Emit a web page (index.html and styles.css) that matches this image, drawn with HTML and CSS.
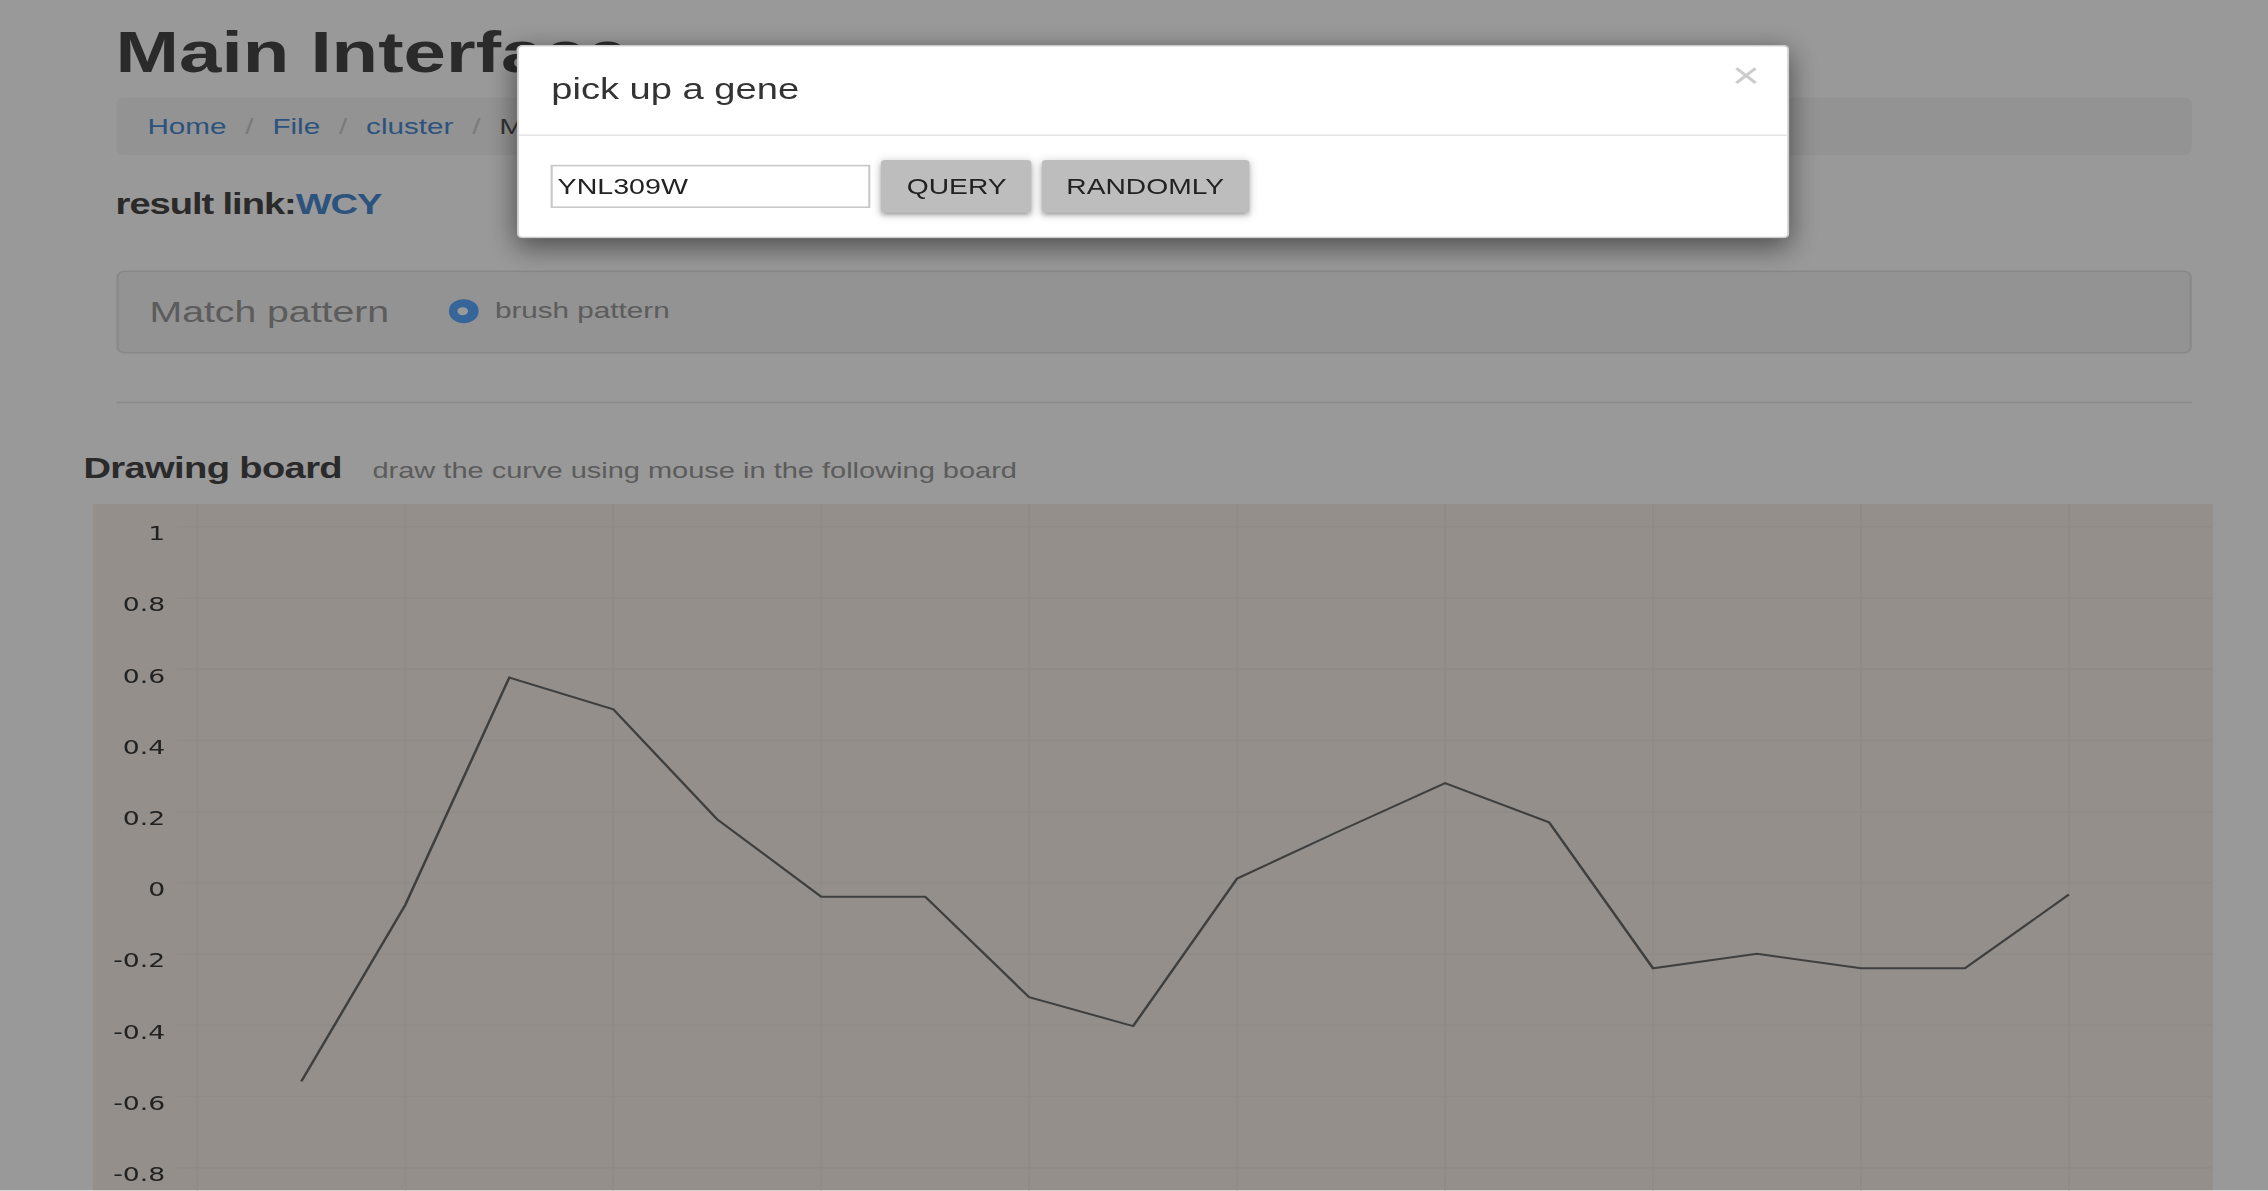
FILE: index.html
```html
<!DOCTYPE html>
<html lang="en">
<head>
<meta charset="utf-8">
<title>Main Interface</title>
<link rel="stylesheet" href="styles.css">
</head>
<body>
<div class="stage">
  <div class="container">
    <h1 class="page-title">Main Interface</h1>
    <ol class="breadcrumb">
      <li><a href="#">Home</a></li>
      <li><a href="#">File</a></li>
      <li><a href="#">cluster</a></li>
      <li class="active">Main Interface</li>
    </ol>
    <h4 class="result">result link:<a href="#">WCY</a></h4>
    <div class="well">
      <span class="well-title">Match pattern</span>
      <label class="radio"><span class="radio-dot"></span>brush pattern</label>
    </div>
    <hr class="rule">
  </div>
  <div class="board">
    <h4 class="board-title">Drawing board <small>draw the curve using mouse in the following board</small></h4>
    <div class="chart">
      <svg class="chart-svg" viewBox="0 0 1000.7 440" xmlns="http://www.w3.org/2000/svg">
        <g class="grid">
          <line x1="49.2" y1="0" x2="49.2" y2="440"/>
          <line x1="147.4" y1="0" x2="147.4" y2="440"/>
          <line x1="245.6" y1="0" x2="245.6" y2="440"/>
          <line x1="343.8" y1="0" x2="343.8" y2="440"/>
          <line x1="442" y1="0" x2="442" y2="440"/>
          <line x1="540.2" y1="0" x2="540.2" y2="440"/>
          <line x1="638.4" y1="0" x2="638.4" y2="440"/>
          <line x1="736.6" y1="0" x2="736.6" y2="440"/>
          <line x1="834.8" y1="0" x2="834.8" y2="440"/>
          <line x1="933" y1="0" x2="933" y2="440"/>
          <line x1="39.6" y1="14.3" x2="1000.7" y2="14.3"/>
          <line x1="39.6" y1="58.8" x2="1000.7" y2="58.8"/>
          <line x1="39.6" y1="103.3" x2="1000.7" y2="103.3"/>
          <line x1="39.6" y1="147.8" x2="1000.7" y2="147.8"/>
          <line x1="39.6" y1="192.3" x2="1000.7" y2="192.3"/>
          <line x1="39.6" y1="236.8" x2="1000.7" y2="236.8"/>
          <line x1="39.6" y1="281.3" x2="1000.7" y2="281.3"/>
          <line x1="39.6" y1="325.8" x2="1000.7" y2="325.8"/>
          <line x1="39.6" y1="370.3" x2="1000.7" y2="370.3"/>
          <line x1="39.6" y1="414.8" x2="1000.7" y2="414.8"/>
        </g>
        <g class="axis">
          <text x="34" y="22.6">1</text>
          <text x="34" y="67.1">0.8</text>
          <text x="34" y="111.6">0.6</text>
          <text x="34" y="156.1">0.4</text>
          <text x="34" y="200.6">0.2</text>
          <text x="34" y="245.1">0</text>
          <text x="34" y="289.6">-0.2</text>
          <text x="34" y="334.1">-0.4</text>
          <text x="34" y="378.6">-0.6</text>
          <text x="34" y="423.1">-0.8</text>
        </g>
        <polyline class="curve" points="98.3,360.9 147.4,250.5 196.5,108.5 245.6,128.3 294.7,197.1 343.8,245.4 392.9,245.4 442,308.3 491.1,326.3 540.2,234.1 589.3,203.9 638.4,174.5 687.5,198.9 736.6,290.2 785.7,281.1 834.8,290.2 883.9,290.2 933,244.1"/>
      </svg>
    </div>
  </div>

  <div class="backdrop"></div>

  <div class="modal">
    <div class="modal-header">
      <h4 class="modal-title">pick up a gene</h4>
      <button class="close" type="button">&times;</button>
    </div>
    <div class="modal-body">
      <input class="gene-input" type="text" value="YNL309W">
      <button class="btn" type="button">Query</button>
      <button class="btn" type="button">Randomly</button>
    </div>
  </div>
</div>
</body>
</html>
```

FILE: styles.css
```css
html, body {
  margin: 0;
  padding: 0;
  width: 2268px;
  height: 1191px;
  overflow: hidden;
  background: #fff;
}

.stage {
  position: relative;
  width: 1071px;
  height: 744.4px;
  overflow: hidden;
  transform: scale(2.11765, 1.6);
  transform-origin: 0 0;
  background: #fff;
  font-family: "Liberation Sans", Arial, sans-serif;
  font-size: 14px;
  line-height: 1.42857;
  color: #333;
}

.container {
  margin-left: 54.6px;
  width: 980.3px;
}

.page-title {
  margin: 12.7px 0 0;
  font-size: 36px;
  line-height: 39.6px;
  font-weight: 700;
  color: #474747;
}

.breadcrumb {
  list-style: none;
  margin: 8.7px 0 0;
  padding: 8px 15px;
  background: #f5f5f5;
  border-radius: 4px;
  line-height: 20px;
}

.breadcrumb li {
  display: inline-block;
}

.breadcrumb li + li::before {
  content: "/\00a0";
  padding: 0 5px;
  color: #ccc;
}

.breadcrumb a {
  color: #4a8bd0;
  text-decoration: none;
}

.breadcrumb .active {
  color: #555;
}

.result {
  margin: 21.9px 0 0;
  font-size: 18px;
  line-height: 19.8px;
  font-weight: 700;
  letter-spacing: -0.5px;
  color: #474747;
}

.result a {
  color: #4a8bd0;
  text-decoration: none;
}

.well {
  margin-top: 30.3px;
  height: 52px;
  box-sizing: border-box;
  border: 1px solid #e3e3e3;
  border-radius: 4px;
  background: #f5f5f5;
  display: flex;
  align-items: center;
  padding: 0 15px;
}

.well-title {
  font-size: 18.5px;
  color: #999;
}

.radio {
  display: flex;
  align-items: center;
  margin-left: 28px;
  font-size: 14px;
  color: #999;
}

.radio-dot {
  width: 14.5px;
  height: 15px;
  border-radius: 50%;
  background: #5aaaff;
  margin-right: 7.5px;
  display: flex;
  align-items: center;
  justify-content: center;
}

.radio-dot::after {
  content: "";
  width: 5px;
  height: 5px;
  border-radius: 50%;
  background: #fff;
}

.rule {
  margin: 30.3px 0 0;
  border: 0;
  border-top: 1px solid #e6e6e6;
  height: 0;
}

.board {
  margin-left: 44.4px;
  width: 1000.7px;
}

.board-title {
  margin: 31.6px 0 0 -5px;
  font-size: 18px;
  line-height: 19.8px;
  font-weight: 700;
  letter-spacing: -0.3px;
  color: #474747;
}

.board-title small {
  font-size: 13.7px;
  font-weight: 400;
  letter-spacing: 0;
  color: #999;
  margin-left: 9.7px;
}

.chart {
  margin-top: 10px;
  height: 440px;
  background: #f7efe8;
}

.chart-svg {
  display: block;
  width: 1000.7px;
  height: 440px;
}

.grid line {
  stroke: #efe8e1;
  stroke-width: 1;
}

.axis text {
  font-family: "DejaVu Sans", Verdana, sans-serif;
  font-size: 12.6px;
  fill: #383838;
  text-anchor: end;
}

.curve {
  fill: none;
  stroke: #6a6a6a;
  stroke-width: 1.25;
  stroke-linejoin: miter;
}

.backdrop {
  position: absolute;
  left: 0;
  top: 0;
  right: 0;
  bottom: 0;
  background: rgba(0, 0, 0, 0.4);
}

.modal {
  position: absolute;
  left: 244.3px;
  top: 27.7px;
  width: 600.5px;
  box-sizing: border-box;
  background: #fff;
  border: 1px solid rgba(0, 0, 0, 0.2);
  border-radius: 3px;
  box-shadow: 0 5px 15px rgba(0, 0, 0, 0.5);
}

.modal-header {
  padding: 15px;
  border-bottom: 1px solid #e5e5e5;
  display: flex;
  justify-content: space-between;
  align-items: flex-start;
}

.modal-title {
  margin: 0;
  font-size: 18px;
  line-height: 25.7px;
  font-weight: 400;
  color: #333;
}

.close {
  font-family: "Liberation Sans", Arial, sans-serif;
  font-size: 23px;
  font-weight: 400;
  line-height: 1;
  color: #000;
  opacity: 0.2;
  background: none;
  border: 0;
  padding: 0;
  margin: -8px -2.4px 0 0;
}

.modal-body {
  padding: 14.5px 15px 14.5px;
  display: flex;
  align-items: center;
}

.gene-input {
  width: 150.7px;
  height: 26.6px;
  box-sizing: border-box;
  border: 1px solid #c8c8c8;
  border-radius: 0;
  padding: 1px 2px;
  margin: 0 5.2px 0 0;
  font-family: "Liberation Sans", Arial, sans-serif;
  font-size: 13.5px;
  color: #222;
  outline: none;
}

.btn {
  height: 33.2px;
  padding: 0 12px;
  margin: 0 4.2px 0 0;
  border: 0;
  border-radius: 2px;
  background: #bdbdbd;
  font-family: "Liberation Sans", Arial, sans-serif;
  font-size: 13.33px;
  color: #222;
  text-transform: uppercase;
  box-shadow: 0 2px 2px 0 rgba(0, 0, 0, 0.14), 0 3px 1px -2px rgba(0, 0, 0, 0.12), 0 1px 5px 0 rgba(0, 0, 0, 0.2);
}
```
